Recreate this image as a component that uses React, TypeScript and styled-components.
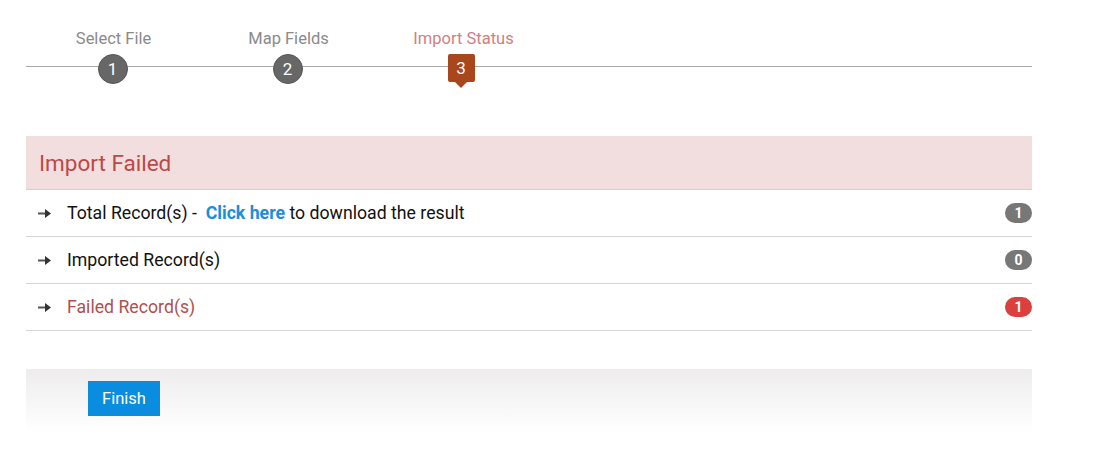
import React from 'react';
import styled, { createGlobalStyle } from 'styled-components';

const GlobalStyle = createGlobalStyle`
    body {
        margin: 0;
        background: #fff;
        font-family: Roboto, 'Liberation Sans', Arial, sans-serif;
    }
`;

const steps = [
    { id: 1, label: 'Select File' },
    { id: 2, label: 'Map Fields' },
    { id: 3, label: 'Import Status' },
];

const records = [
    { id: 'total', label: 'Total Record(s)', count: 1, link: true },
    { id: 'imported', label: 'Imported Record(s)', count: 0 },
    { id: 'failed', label: 'Failed Record(s)', count: 1, danger: true },
];

const ACTIVE_STEP = 3;

const ArrowIcon = () => (
    <svg width="13" height="9" viewBox="0 0 13 9">
        <rect x="0" y="3.5" width="9" height="2" fill="#555" />
        <path d="M7 0 L13 4.5 L7 9 Z" fill="#333" />
    </svg>
);

export default function App() {
    return (
        <Page>
            <GlobalStyle />
            <StepsBar>
                {steps.map((s) => (
                    <Step key={s.id}>
                        <StepLabel $active={s.id === ACTIVE_STEP}>{s.label}</StepLabel>
                        {s.id === ACTIVE_STEP ? <ActiveMarker>{s.id}</ActiveMarker> : <Marker>{s.id}</Marker>}
                    </Step>
                ))}
            </StepsBar>

            <Panel>
                <PanelHeader>Import Failed</PanelHeader>
                {records.map((r) => (
                    <RecordRow key={r.id}>
                        <Arrow>
                            <ArrowIcon />
                        </Arrow>
                        <RecordText $danger={r.danger}>
                            {r.label}
                            {r.link && (
                                <>
                                    {' -  '}
                                    <Link href="#">Click here</Link> to download the result
                                </>
                            )}
                        </RecordText>
                        <Badge $danger={r.danger}>{r.count}</Badge>
                    </RecordRow>
                ))}
            </Panel>

            <Footer>
                <FinishButton>Finish</FinishButton>
            </Footer>
        </Page>
    );
}

const Page = styled.div`
    width: 1006px;
    margin-left: 26px;
    padding-top: 28px;
    padding-bottom: 27px;
`;

const StepsBar = styled.div`
    position: relative;
    display: flex;

    &::before {
        content: '';
        position: absolute;
        left: 0;
        right: 0;
        top: 38px;
        height: 1px;
        background: #a9a9a9;
    }
`;

const Step = styled.div`
    width: 175px;
    display: flex;
    flex-direction: column;
    align-items: center;
    gap: 6px;
    position: relative;
`;

const StepLabel = styled.div<{ $active?: boolean }>`
    font-size: 16.5px;
    line-height: 20px;
    padding-top: 1px;
    margin-bottom: -1px;
    color: ${(p) => (p.$active ? '#cf7f7f' : '#8a8a8a')};
`;

const Marker = styled.div`
    width: 30px;
    height: 30px;
    margin-left: -2px;
    border-radius: 50%;
    background: #676767;
    color: #fff;
    font-size: 17px;
    display: flex;
    align-items: center;
    justify-content: center;
    box-sizing: border-box;
    border: 1px solid #555;
`;

const ActiveMarker = styled.div`
    position: relative;
    width: 27px;
    height: 28px;
    margin-left: -5px;
    border-radius: 2px;
    background: #a9461c;
    color: #fff;
    font-size: 17px;
    display: flex;
    align-items: center;
    justify-content: center;
    margin-bottom: 6px;

    &::after {
        content: '';
        position: absolute;
        left: 50%;
        bottom: -6px;
        margin-left: -6px;
        border-left: 6px solid transparent;
        border-right: 6px solid transparent;
        border-top: 6px solid #a9461c;
    }
`;

const Panel = styled.div`
    margin-top: 48px;
`;

const PanelHeader = styled.div`
    height: 54px;
    box-sizing: border-box;
    padding: 0 13px;
    display: flex;
    align-items: center;
    background: #f2dede;
    border-bottom: 1px solid #d6d0d0;
    color: #b94a48;
    font-size: 22.5px;
`;

const RecordRow = styled.div`
    height: 47px;
    box-sizing: border-box;
    display: flex;
    align-items: center;
    border-bottom: 1px solid #d5d5d5;
    padding-left: 12px;
`;

const Arrow = styled.span`
    width: 29px;
    display: flex;
    align-items: center;
`;

const RecordText = styled.span<{ $danger?: boolean }>`
    flex: 1;
    font-size: 17.7px;
    white-space: pre;
    color: ${(p) => (p.$danger ? '#b0504e' : '#111')};
`;

const Link = styled.a`
    color: #1a8ddf;
    font-weight: bold;
    text-decoration: none;
`;

const Badge = styled.span<{ $danger?: boolean }>`
    min-width: 27px;
    height: 20px;
    border-radius: 10px;
    background: ${(p) => (p.$danger ? '#d9403e' : '#777')};
    color: #fff;
    font-size: 14px;
    font-weight: bold;
    display: flex;
    align-items: center;
    justify-content: center;
`;

const Footer = styled.div`
    margin-top: 38px;
    height: 63px;
    box-sizing: border-box;
    padding: 12px 62px;
    background: linear-gradient(to bottom, #eeecec, #ffffff);
`;

const FinishButton = styled.button`
    width: 72px;
    height: 35px;
    border: none;
    border-radius: 0;
    background: #0a8ddf;
    color: #fff;
    font-family: Roboto, 'Liberation Sans', Arial, sans-serif;
    font-size: 16.5px;
    cursor: pointer;
`;
